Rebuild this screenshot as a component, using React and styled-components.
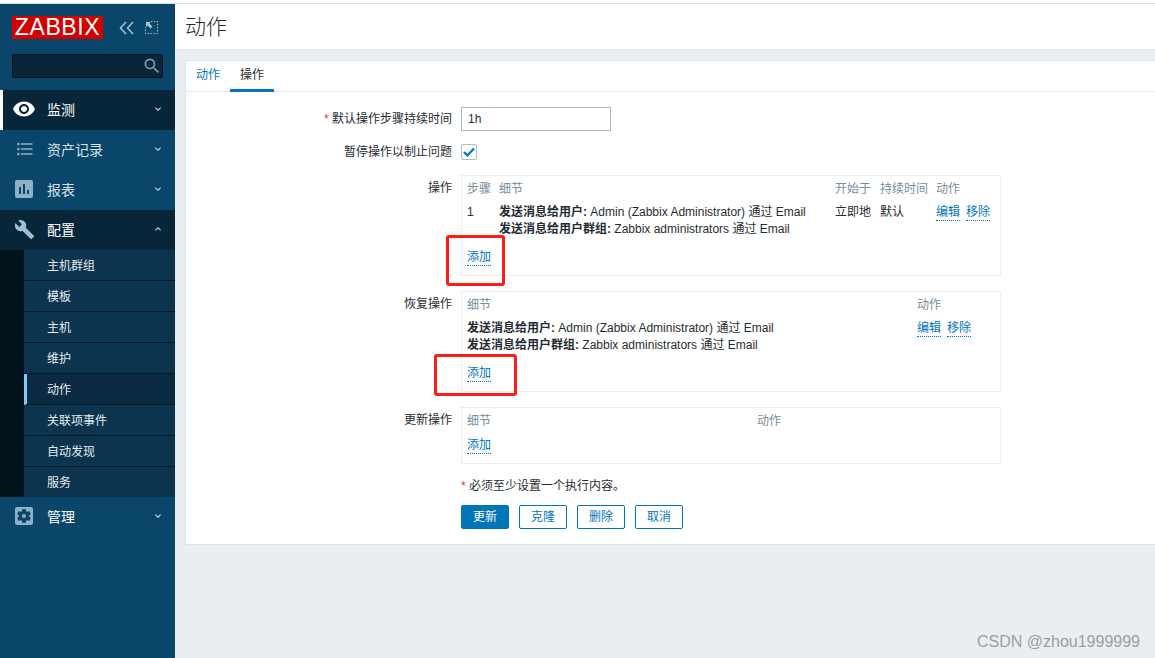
import React from 'react'
import styled, { createGlobalStyle } from 'styled-components'
import {
  MdVisibility,
  MdFormatListBulleted,
  MdAssessment,
  MdBuild,
  MdSettingsApplications,
  MdKeyboardArrowDown,
  MdKeyboardArrowUp,
  MdSearch
} from 'react-icons/md'

const GlobalStyle = createGlobalStyle`
  html, body {
    margin: 0;
    height: 100%;
    overflow: hidden;
    background: #fff;
  }
  body {
    font-family: "Liberation Sans", "Noto Sans CJK SC", sans-serif;
    font-size: 12px;
    color: #1f2c33;
  }
  * {
    box-sizing: border-box;
  }
`

const Page = styled.div`
  display: flex;
  height: 100vh;
  padding-top: 3px;
  position: relative;
`

const Frame = styled.div`
  display: flex;
  flex: 1;
  border-top: 1px solid #dfe1e2;
  min-width: 0;
`

const Sidebar = styled.aside`
  width: 175px;
  flex: none;
  background: #0a466a;
  display: flex;
  flex-direction: column;
`

const Brand = styled.div`
  display: flex;
  align-items: center;
  padding: 12px 0 0 12px;
  height: 35px;
`

const Logo = styled.div`
  width: 91px;
  height: 23px;
  background: #d40000;
  color: #fff;
  font-size: 23px;
  line-height: 23px;
  font-weight: 400;
  text-align: center;
  letter-spacing: 0.6px;
`

const BrandIcons = styled.div`
  display: flex;
  align-items: center;
  gap: 11px;
  margin-left: 16px;
  color: #a9c3d3;
`

const SearchBox = styled.div`
  margin: 15px 12px 12px;
  height: 24px;
  background: #08263a;
  border: 1px solid #04131d;
  border-radius: 2px;
  display: flex;
  align-items: center;
  justify-content: flex-end;
  color: #7f9bab;
  font-size: 20px;
`

const NavItem = styled.div`
  height: 40px;
  display: flex;
  align-items: center;
  background: ${p => (p.$dark ? '#08263a' : 'transparent')};
  color: ${p => (p.$bright ? '#fff' : '#d6e2ea')};
  font-size: 14px;
  padding-bottom: 2px;
  padding-left: ${p => (p.$mark ? '12px' : '15px')};
  border-left: ${p => (p.$mark ? '3px solid #fff' : 'none')};
`

const NavIcon = styled.span`
  width: ${p => 32 - (p.$shift || 0)}px;
  flex: none;
  display: flex;
  align-items: center;
  margin-left: ${p => p.$shift || 0}px;
  font-size: ${p => p.$size || 20}px;
  color: ${p => p.$color || '#8fb0c6'};
`

const NavLabel = styled.span`
  flex: 1;
`

const Caret = styled.span`
  width: 23px;
  display: flex;
  font-size: 12px;
  color: #d0dee7;
`

const SubNav = styled.div`
  padding-left: 24px;
  background: #03131c;
`

const SubItem = styled.div`
  height: 31px;
  line-height: 32px;
  font-size: 12px;
  color: #e3ebf0;
  background: ${p => (p.$active ? '#0a2a41' : '#0d344f')};
  border-bottom: 1px solid #04192a;
  padding-left: ${p => (p.$active ? '20px' : '23px')};
  border-left: ${p => (p.$active ? '3px solid #7fcbfb' : 'none')};

  &:last-child {
    height: 30px;
    border-bottom: none;
  }
`

const Main = styled.main`
  flex: 1;
  min-width: 0;
  background: #ebeef0;
`

const Header = styled.header`
  height: 46px;
  background: #fff;
  border-bottom: 1px solid #dfe4e7;
  padding: 0 0 3px 10px;
  display: flex;
  align-items: center;
  font-size: 21px;
  font-weight: 300;
  color: #1f2c33;
`

const Card = styled.section`
  margin: 10px 0 0 10px;
  height: 485px;
  background: #fff;
  border: 1px solid #dfe4e7;
  border-right: none;
`

const Tabs = styled.div`
  display: flex;
  height: 31px;
  border-bottom: 1px solid #ebeef0;
`

const Tab = styled.div`
  height: 31px;
  width: 44px;
  line-height: 29px;
  text-align: center;
  color: ${p => (p.$active ? '#1f2c33' : '#0275b8')};
  border-bottom: ${p => (p.$active ? '3px solid #0275b8' : 'none')};
`

const Form = styled.div`
  display: grid;
  grid-template-columns: 266px 540px;
  column-gap: 9px;
  padding-top: 15px;
`

const Label = styled.div`
  text-align: right;
  line-height: ${p => p.$line || 24}px;
  margin-bottom: ${p => p.$gap || 0}px;
`

const Req = styled.span`
  color: #e33734;
`

const Field = styled.div`
  margin-bottom: ${p => p.$gap || 0}px;
`

const TextInput = styled.div`
  width: 150px;
  height: 24px;
  border: 1px solid #acbbc2;
  line-height: 22px;
  padding-left: 6px;
`

const Check = styled.div`
  width: 16px;
  height: 16px;
  margin-top: 4px;
  border: 1px solid #acbbc2;
  border-radius: 2px;
  display: flex;
  align-items: center;
  justify-content: center;
  color: #0275b8;
`

const OpsBox = styled.div`
  height: ${p => p.$height}px;
  border: 1px solid #ebeef0;
  padding: 5px 5px 4px;
`

const OpsRow = styled.div`
  display: grid;
  grid-template-columns: ${p => p.$cols};
  line-height: 17px;
  margin-bottom: ${p => p.$after || 0}px;
`

const Head = styled.div`
  color: #768d99;
`

const Links = styled.div`
  display: flex;
  align-items: flex-start;
  gap: 6px;
`

const DottedLink = styled.span`
  color: #0275b8;
  border-bottom: 1px dotted #0275b8;
  display: inline-block;
  line-height: 16px;
`

const AddRow = styled.div`
  line-height: 17px;
  margin-top: ${p => p.$top}px;
`

const Note = styled.div`
  line-height: 17px;
  margin-top: 14px;
`

const Buttons = styled.div`
  display: flex;
  gap: 10px;
  margin-top: 10px;
`

const Button = styled.div`
  width: 48px;
  height: 24px;
  line-height: 22px;
  text-align: center;
  border: 1px solid #0275b8;
  border-radius: 2px;
  color: ${p => (p.$primary ? '#fff' : '#0275b8')};
  background: ${p => (p.$primary ? '#0275b8' : '#fff')};
`

const Callout = styled.div`
  position: absolute;
  left: ${p => p.$x}px;
  top: ${p => p.$y}px;
  width: ${p => p.$w}px;
  height: ${p => p.$h}px;
  border: 3px solid #fb1d16;
  border-radius: 3px;
`

const Watermark = styled.div`
  position: absolute;
  right: 15px;
  bottom: 7px;
  font-size: 16px;
  line-height: 18px;
  color: #9a9fa3;
`

const CollapseIcon = () => (
  <svg width="15" height="14" viewBox="0 0 15 14" fill="none" stroke="currentColor" strokeWidth="1.5">
    <path d="M7 1 1.5 7 7 13" />
    <path d="M14 1 8.5 7 14 13" />
  </svg>
)

const ExpandIcon = () => (
  <svg width="13" height="13" viewBox="0 0 13 13" fill="none">
    <path d="M6 .5h6.5v12H.5V6" stroke="currentColor" strokeDasharray="1.5 1.5" />
    <path d="M1 1h5L4.4 2.6 7.5 5.7 5.7 7.5 2.6 4.4 1 6z" fill="currentColor" />
  </svg>
)

const CheckMark = () => (
  <svg width="12" height="10" viewBox="0 0 12 10" fill="none" stroke="currentColor" strokeWidth="2.2">
    <path d="M1 5 4.4 8.4 11 1.5" />
  </svg>
)

const subItems = ['主机群组', '模板', '主机', '维护', '动作', '关联项事件', '自动发现', '服务']

const Detail = ({ group }) => (
  <div>
    <b>{group ? '发送消息给用户群组:' : '发送消息给用户:'}</b>{' '}
    {group ? 'Zabbix administrators' : 'Admin (Zabbix Administrator)'} 通过 Email
  </div>
)

const ActionLinks = () => (
  <Links>
    <DottedLink>编辑</DottedLink>
    <DottedLink>移除</DottedLink>
  </Links>
)

const App = () => (
  <Page>
    <GlobalStyle />
    <Frame>
      <Sidebar>
        <Brand>
          <Logo>ZABBIX</Logo>
          <BrandIcons>
            <CollapseIcon />
            <ExpandIcon />
          </BrandIcons>
        </Brand>
        <SearchBox>
          <MdSearch />
        </SearchBox>
        <NavItem $dark $bright $mark>
          <NavIcon $size={24} $shift={-3} $color="#fff">
            <MdVisibility />
          </NavIcon>
          <NavLabel>监测</NavLabel>
          <Caret>
            <MdKeyboardArrowDown />
          </Caret>
        </NavItem>
        <NavItem>
          <NavIcon>
            <MdFormatListBulleted />
          </NavIcon>
          <NavLabel>资产记录</NavLabel>
          <Caret>
            <MdKeyboardArrowDown />
          </Caret>
        </NavItem>
        <NavItem>
          <NavIcon $size={24} $shift={-3}>
            <MdAssessment />
          </NavIcon>
          <NavLabel>报表</NavLabel>
          <Caret>
            <MdKeyboardArrowDown />
          </Caret>
        </NavItem>
        <NavItem $dark $bright>
          <NavIcon $size={21} $shift={-1} $color="#9fc0d4">
            <MdBuild />
          </NavIcon>
          <NavLabel>配置</NavLabel>
          <Caret>
            <MdKeyboardArrowUp />
          </Caret>
        </NavItem>
        <SubNav>
          {subItems.map(item => (
            <SubItem key={item} $active={item === '动作'}>
              {item}
            </SubItem>
          ))}
        </SubNav>
        <NavItem $bright>
          <NavIcon $size={24} $shift={-3}>
            <MdSettingsApplications />
          </NavIcon>
          <NavLabel>管理</NavLabel>
          <Caret>
            <MdKeyboardArrowDown />
          </Caret>
        </NavItem>
      </Sidebar>
      <Main>
        <Header>动作</Header>
        <Card>
          <Tabs>
            <Tab>动作</Tab>
            <Tab $active>操作</Tab>
          </Tabs>
          <Form>
            <Label $gap={9}>
              <Req>*</Req> 默认操作步骤持续时间
            </Label>
            <Field $gap={9}>
              <TextInput>1h</TextInput>
            </Field>

            <Label $gap={11}>暂停操作以制止问题</Label>
            <Field $gap={11}>
              <Check>
                <CheckMark />
              </Check>
            </Field>

            <Label $line={26}>操作</Label>
            <Field $gap={15}>
              <OpsBox $height={101}>
                <OpsRow $cols="32px 336px 45px 56px 1fr" $after={6}>
                  <Head>步骤</Head>
                  <Head>细节</Head>
                  <Head>开始于</Head>
                  <Head>持续时间</Head>
                  <Head>动作</Head>
                </OpsRow>
                <OpsRow $cols="32px 336px 45px 56px 1fr">
                  <div>1</div>
                  <div>
                    <Detail />
                    <Detail group />
                  </div>
                  <div>立即地</div>
                  <div>默认</div>
                  <ActionLinks />
                </OpsRow>
                <AddRow $top={11}>
                  <DottedLink>添加</DottedLink>
                </AddRow>
              </OpsBox>
            </Field>

            <Label $line={26}>恢复操作</Label>
            <Field $gap={15}>
              <OpsBox $height={101}>
                <OpsRow $cols="450px 1fr" $after={6}>
                  <Head>细节</Head>
                  <Head>动作</Head>
                </OpsRow>
                <OpsRow $cols="450px 1fr">
                  <div>
                    <Detail />
                    <Detail group />
                  </div>
                  <ActionLinks />
                </OpsRow>
                <AddRow $top={11}>
                  <DottedLink>添加</DottedLink>
                </AddRow>
              </OpsBox>
            </Field>

            <Label $line={26}>更新操作</Label>
            <Field>
              <OpsBox $height={57}>
                <OpsRow $cols="290px 1fr" $after={7}>
                  <Head>细节</Head>
                  <Head>动作</Head>
                </OpsRow>
                <AddRow $top={0}>
                  <DottedLink>添加</DottedLink>
                </AddRow>
              </OpsBox>
              <Note>
                <Req>*</Req> 必须至少设置一个执行内容。
              </Note>
              <Buttons>
                <Button $primary>更新</Button>
                <Button>克隆</Button>
                <Button>删除</Button>
                <Button>取消</Button>
              </Buttons>
            </Field>
          </Form>
        </Card>
      </Main>
    </Frame>
    <Callout $x={446} $y={235} $w={59} $h={51} />
    <Callout $x={434} $y={354} $w={83} $h={42} />
    <Watermark>CSDN @zhou1999999</Watermark>
  </Page>
)

export default App
